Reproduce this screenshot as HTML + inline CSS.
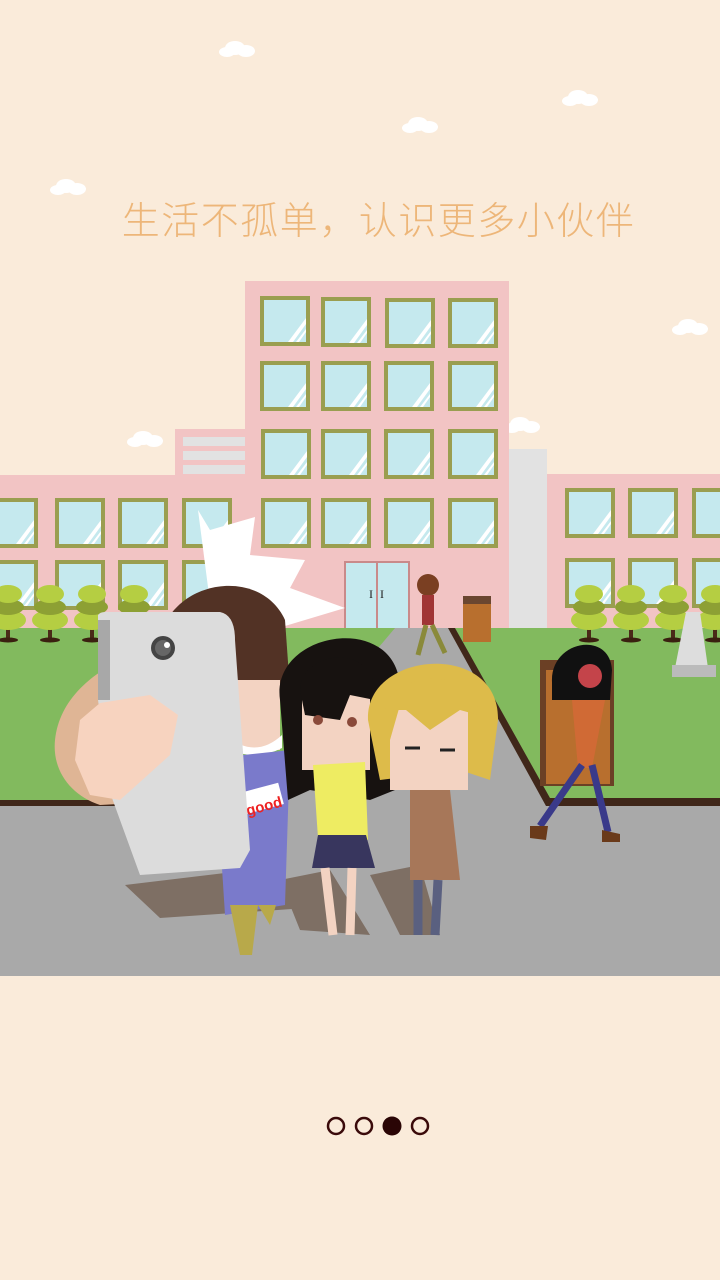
<!DOCTYPE html>
<html><head><meta charset="utf-8"><style>
html,body{margin:0;padding:0;background:#FAEBDA;width:720px;height:1280px;overflow:hidden;position:relative}
.t{position:absolute;left:0;width:757px;top:190px;text-align:center;font-family:"Liberation Sans","Noto Sans CJK SC",sans-serif;font-size:38px;color:#EDB679;letter-spacing:1.5px;font-weight:300}
svg{position:absolute;left:0;top:0}
</style></head><body>
<svg width="720" height="1280" viewBox="0 0 720 1280">
<defs>
<g id="w"><rect width="50" height="50" fill="#9A9E50"/><rect x="4" y="4" width="42" height="42" fill="#C5E9EE"/><path d="M28 46 L46 22 V28 L33 46Z M36 46 L46 33 V36 L39 46Z" fill="#fff"/></g>
<g id="tr"><rect x="-2" y="30" width="4" height="30" fill="#4a2a18"/><ellipse cx="0" cy="60" rx="10" ry="2.5" fill="#3a2010"/><ellipse cx="0" cy="40" rx="18" ry="10" fill="#B5CE42"/><ellipse cx="0" cy="27" rx="16" ry="8" fill="#8DA034"/><ellipse cx="0" cy="14" rx="14" ry="9" fill="#B5CE42"/></g>
<g id="cl"><ellipse cx="0" cy="0" rx="10" ry="7" fill="#fff"/><ellipse cx="11" cy="3" rx="9" ry="6" fill="#fff"/><ellipse cx="-8" cy="4" rx="8" ry="5" fill="#fff"/></g>
</defs>
<use href="#cl" x="235" y="48"/><use href="#cl" x="418" y="124"/><use href="#cl" x="578" y="97"/><use href="#cl" x="66" y="186"/><use href="#cl" x="143" y="438"/><use href="#cl" x="688" y="326"/><use href="#cl" x="520" y="424"/>
<rect x="0" y="475" width="245" height="153" fill="#F2C4C4"/>
<rect x="175" y="429" width="72" height="50" fill="#F2C4C4"/>
<rect x="183" y="437" width="62" height="9" fill="#E2E2E2"/><rect x="183" y="451" width="62" height="9" fill="#E2E2E2"/><rect x="183" y="465" width="62" height="9" fill="#E2E2E2"/>
<rect x="509" y="449" width="38" height="179" fill="#E2E2E2"/>
<rect x="547" y="474" width="173" height="154" fill="#F2C4C4"/>
<rect x="245" y="281" width="264" height="347" fill="#F2C4C4"/>
<g>
<use href="#w" x="260" y="296"/><use href="#w" x="321" y="297"/><use href="#w" x="385" y="298"/><use href="#w" x="448" y="298"/>
<use href="#w" x="260" y="361"/><use href="#w" x="321" y="361"/><use href="#w" x="384" y="361"/><use href="#w" x="448" y="361"/>
<use href="#w" x="261" y="429"/><use href="#w" x="321" y="429"/><use href="#w" x="384" y="429"/><use href="#w" x="448" y="429"/>
<use href="#w" x="261" y="498"/><use href="#w" x="321" y="498"/><use href="#w" x="384" y="498"/><use href="#w" x="448" y="498"/>
<use href="#w" x="-12" y="498"/><use href="#w" x="55" y="498"/><use href="#w" x="118" y="498"/><use href="#w" x="182" y="498"/>
<use href="#w" x="-12" y="560"/><use href="#w" x="55" y="560"/><use href="#w" x="118" y="560"/><use href="#w" x="182" y="560"/>
<use href="#w" x="565" y="488"/><use href="#w" x="628" y="488"/><use href="#w" x="692" y="488"/>
<use href="#w" x="565" y="558"/><use href="#w" x="628" y="558"/><use href="#w" x="692" y="558"/>
</g>
<rect x="344" y="561" width="66" height="67" fill="#C98A8A"/><rect x="346" y="563" width="30" height="65" fill="#C5E9EE"/><rect x="378" y="563" width="30" height="65" fill="#C5E9EE"/>
<text x="369" y="598" font-size="12" font-family="Liberation Serif" fill="#222">I</text><text x="380" y="598" font-size="12" font-family="Liberation Serif" fill="#222">I</text>
<rect x="0" y="628" width="720" height="180" fill="#82BA5E"/>
<path d="M395 628 L455 628 L548 800 L720 800 L720 808 L0 808 L0 800 L250 800 Z" fill="#A9A9A9"/>
<path d="M448 628 L455 628 L550 798 L720 798 L720 806 L546 806 Z" fill="#40271A"/>
<rect x="0" y="800" width="250" height="7" fill="#40271A"/>
<rect x="0" y="806" width="720" height="170" fill="#A9A9A9"/>
<use href="#tr" x="8" y="580"/><use href="#tr" x="50" y="580"/><use href="#tr" x="92" y="580"/><use href="#tr" x="134" y="580"/>
<use href="#tr" x="589" y="580"/><use href="#tr" x="631" y="580"/><use href="#tr" x="673" y="580"/><use href="#tr" x="715" y="580"/>
<path d="M675 668 L686 612 L700 612 L708 668 Z" fill="#ddd"/><rect x="672" y="665" width="44" height="12" fill="#bbb"/>
<rect x="463" y="598" width="28" height="44" fill="#B86F2E"/><rect x="463" y="596" width="28" height="8" fill="#6a4630"/>
<circle cx="428" cy="585" r="11" fill="#7a3f22"/><rect x="422" y="595" width="12" height="30" fill="#A03535"/><path d="M426 625 L418 655 M432 625 L445 653" stroke="#8A8A3A" stroke-width="5"/>
<rect x="540" y="660" width="74" height="126" fill="#6B4025"/><rect x="546" y="670" width="64" height="114" fill="#B86F2E"/>
<path d="M552 682 C550 640 610 630 612 670 L610 700 L552 700Z" fill="#111"/>
<circle cx="590" cy="676" r="12" fill="#C4444A"/>
<path d="M572 700 L605 700 L592 768 L578 768Z" fill="#D06A35"/>
<path d="M582 765 L540 826 M592 765 L608 832" stroke="#3A3A8A" stroke-width="7"/>
<path d="M530 826 L548 826 L546 840 L530 838Z M602 830 L620 834 L620 842 L602 842Z" fill="#6a3a1a"/>
<path d="M125 885 L250 870 L350 905 L160 918 Z" fill="#7E6F64"/>
<path d="M280 880 L330 870 L370 935 L300 930 Z M370 875 L420 865 L440 935 L400 935Z" fill="#7E6F64"/>
<path d="M198 510 L210 530 L255 517 L250 555 L305 560 L290 588 L345 608 L265 632 L212 618 Z" fill="#fff"/>
<path d="M160 640 C170 580 260 565 285 620 L290 690 L175 700Z" fill="#523225"/>
<rect x="210" y="680" width="70" height="70" fill="#F3D3C2"/>
<path d="M225 735 Q255 760 282 735 L282 748 Q255 762 225 748Z" fill="#fff"/>
<path d="M215 758 L290 750 L285 905 L225 915 Z" fill="#7A7ACB"/>
<rect x="240" y="788" width="42" height="22" fill="#fff" transform="rotate(-15 260 800)"/>
<text x="244" y="812" font-size="15" font-weight="bold" font-family="Liberation Sans" fill="#E22" transform="rotate(-15 260 800)">good</text>
<path d="M230 905 L240 955 L252 955 L258 905 L270 925 L276 905Z" fill="#B8A94A"/>
<path d="M55 740 C60 690 110 660 150 650 L190 690 L190 800 L100 805 C70 795 52 770 55 740Z" fill="#DFB595"/>
<path d="M98 615 Q100 612 105 612 L220 612 Q235 615 235 640 L250 850 L240 868 L140 875 L112 798 L98 700 Z" fill="#DCDCDC"/>
<rect x="98" y="620" width="12" height="80" fill="#A8A8A8"/>
<circle cx="163" cy="648" r="12" fill="#444"/><circle cx="163" cy="648" r="8" fill="#666"/><circle cx="167" cy="645" r="3" fill="#fff"/>
<path d="M80 720 L100 703 L150 695 L178 715 L170 755 L120 800 L90 795 L75 760Z" fill="#F7D3BF"/>
<path d="M280 700 C270 630 400 610 400 690 L395 790 L370 800 L310 790 L288 800 Z" fill="#171210"/>
<rect x="302" y="690" width="68" height="80" fill="#F3D3C2"/>
<path d="M300 690 C300 650 380 640 375 700 L350 695 L340 720 L305 715Z" fill="#171210"/>
<circle cx="318" cy="720" r="5" fill="#8a4a3a"/><circle cx="352" cy="722" r="5" fill="#8a4a3a"/>
<path d="M313 765 L365 762 L368 840 L318 838Z" fill="#EEEC62"/>
<path d="M318 835 L366 835 L375 868 L312 868Z" fill="#38365E"/>
<path d="M325 868 L333 935 M352 868 L350 935" stroke="#F3D3C2" stroke-width="9"/>
<path d="M368 720 C365 650 500 640 498 720 L490 780 L460 770 L380 780Z" fill="#DDBB4A"/>
<rect x="390" y="710" width="78" height="80" fill="#F3D3C2"/>
<path d="M385 710 C390 670 480 665 478 715 L460 710 L430 730 L400 705 L390 740Z" fill="#DDBB4A"/>
<path d="M405 748 L420 748 M440 750 L455 750" stroke="#222" stroke-width="3"/>
<path d="M410 790 L450 790 L460 880 L410 880Z" fill="#A77759"/>
<path d="M418 880 L418 935 M438 880 L435 935" stroke="#5A6080" stroke-width="9"/>
<circle cx="336" cy="1126" r="8" fill="none" stroke="#3A0A0A" stroke-width="2.5"/>
<circle cx="364" cy="1126" r="8" fill="none" stroke="#3A0A0A" stroke-width="2.5"/>
<circle cx="392" cy="1126" r="9.5" fill="#2A0505"/>
<circle cx="420" cy="1126" r="8" fill="none" stroke="#3A0A0A" stroke-width="2.5"/>
</svg>
<div class="t">生活不孤单，认识更多小伙伴</div>
</body></html>
